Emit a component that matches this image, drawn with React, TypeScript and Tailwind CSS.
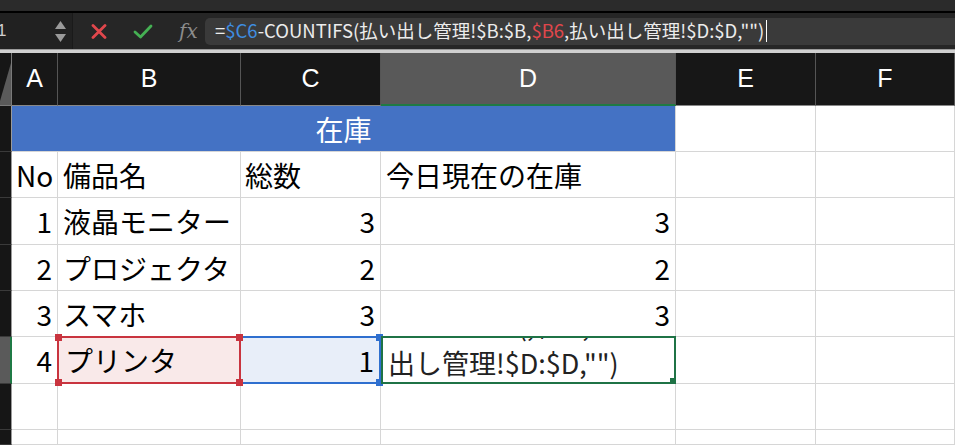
import type { ReactNode } from 'react'

const JP = "font-['Noto_Sans_CJK_JP','Noto_Sans',sans-serif]"

const COLS = ['A', 'B', 'C', 'D', 'E', 'F']

const ROWS: { no: number; name: string; total: number; stock: number }[] = [
  { no: 1, name: '液晶モニター', total: 3, stock: 3 },
  { no: 2, name: 'プロジェクタ', total: 2, stock: 2 },
  { no: 3, name: 'スマホ', total: 3, stock: 3 },
]

function Cell({ children, className = '' }: { children?: ReactNode; className?: string }) {
  return (
    <div className={`flex items-center overflow-hidden whitespace-nowrap border-b border-r border-[#d6d6d6] bg-white text-[28px] text-black ${className}`}>
      {children}
    </div>
  )
}

function RowHead({ active = false }: { active?: boolean }) {
  return (
    <div
      className={`border-b border-[#3a3a3a] ${
        active ? 'border-r-2 border-r-[#1f7a45] bg-[#5a5a5a]' : 'border-r border-r-[#9a9a9a] bg-[#161616]'
      }`}
    />
  )
}

function Handle({ className }: { className: string }) {
  return <span className={`absolute h-[7px] w-[7px] ${className}`} />
}

export default function App() {
  return (
    <div className={`flex h-[445px] w-[955px] flex-col overflow-hidden bg-[#1a1a1a] ${JP}`}>
      {/* window strip */}
      <div className="h-[13px] border-b-2 border-black bg-[#2b2b2b]" />

      {/* formula bar */}
      <div className="flex h-[36px] items-center bg-[#262626]">
        <div className="flex h-full w-[72px] items-center justify-between overflow-hidden bg-[#212121] pr-[6px]">
          <span className="-ml-[3px] font-['Liberation_Sans',sans-serif] text-[17px] text-[#cfcfcf]">1</span>
          <div className="flex flex-col gap-[5px]">
            <svg width="11" height="8" viewBox="0 0 11 8"><path d="M5.5 0L11 8H0z" fill="#9a9a9a" /></svg>
            <svg width="11" height="8" viewBox="0 0 11 8"><path d="M0 0H11L5.5 8z" fill="#9a9a9a" /></svg>
          </div>
        </div>
        <div className="h-full w-px bg-[#1a1a1a]" />
        <div className="ml-[18px] flex w-[114px] items-center gap-[26px]">
          <svg width="16" height="15" viewBox="0 0 16 15">
            <path d="M2 1.5L14 13.5M14 1.5L2 13.5" stroke="#e0474c" strokeWidth="2.8" strokeLinecap="round" />
          </svg>
          <svg width="20" height="15" viewBox="0 0 20 15">
            <path d="M2 8L7.5 13L18 2" stroke="#45b053" strokeWidth="2.8" fill="none" strokeLinecap="round" strokeLinejoin="round" />
          </svg>
          <span className="font-['DejaVu_Serif','Liberation_Serif',serif] text-[20px] italic text-[#8c8c8c]">fx</span>
        </div>
        <div className="flex h-[27px] flex-1 items-center rounded-l-[5px] bg-[#3a3a3a] pl-[10px] text-[18.5px] text-[#ececec]">
          <span>=</span>
          <span className="text-[#3f8de0]">$C6</span>
          <span>-COUNTIFS(払い出し管理!$B:$B,</span>
          <span className="text-[#e0474c]">$B6</span>
          <span>,払い出し管理!$D:$D,"")</span>
          <span className="ml-[2px] h-[22px] w-px bg-white" />
        </div>
      </div>

      <div className="h-[4px] border-t border-[#9a9a9a] bg-[#d0d0d0]" />

      {/* sheet */}
      <div className="grid flex-1 grid-cols-[12px_46px_183px_140px_295px_140px_1fr] grid-rows-[53px_46px_46px_47px_46px_46px_47px_46px_1fr]">
        {/* column headers */}
        <div className="flex items-end border-b border-r border-[#7a7a7a] bg-[#161616]">
          <svg width="11" height="48" viewBox="0 0 11 48"><path d="M0 48V44L11 6V48z" fill="#5a5a5a" /></svg>
        </div>
        {COLS.map((c) => (
          <div
            key={c}
            className={`flex items-center justify-center border-r border-[#555] font-['Liberation_Sans',sans-serif] text-[25px] text-white ${
              c === 'D' ? 'border-b-2 border-b-[#1f7a45] bg-[#595959]' : 'border-b border-b-[#888] bg-[#171717]'
            }`}
          >
            {c}
          </div>
        ))}

        {/* row 1 */}
        <RowHead />
        <div className="col-span-4 flex items-center justify-center border-b border-r border-[#d6d6d6] bg-[#4472c4] text-[28px] text-white">
          在庫
        </div>
        <Cell />
        <Cell />

        {/* row 2 */}
        <RowHead />
        <Cell className="pl-[4px]">No</Cell>
        <Cell className="pl-[5px]">備品名</Cell>
        <Cell className="pl-[4px]">総数</Cell>
        <Cell className="pl-[5px]">今日現在の在庫</Cell>
        <Cell />
        <Cell />

        {ROWS.map((r) => (
          <div key={r.no} className="contents">
            <RowHead />
            <Cell className="justify-end pr-[5px]">{r.no}</Cell>
            <Cell className="pl-[5px]">{r.name}</Cell>
            <Cell className="justify-end pr-[5px]">{r.total}</Cell>
            <Cell className="justify-end pr-[5px]">{r.stock}</Cell>
            <Cell />
            <Cell />
          </div>
        ))}

        {/* row 6: editing */}
        <RowHead active />
        <Cell className="justify-end pr-[5px]">4</Cell>
        <div className="relative z-10 -mt-px -ml-px flex items-center border-2 border-[#c9343f] bg-[#f9e9e9] pl-[6px] text-[28px] text-black">
          プリンタ
          <Handle className="-left-[4px] -top-[4px] bg-[#c9343f]" />
          <Handle className="-right-[4px] -top-[4px] bg-[#c9343f]" />
          <Handle className="-left-[4px] -bottom-[4px] bg-[#c9343f]" />
          <Handle className="-right-[4px] -bottom-[4px] bg-[#c9343f]" />
        </div>
        <div className="relative -mt-px flex items-center justify-end border-2 border-l-0 border-[#2f6fcf] bg-[#e8eef9] pr-[5px] text-[28px] text-black">
          1
          <Handle className="-right-[4px] -top-[4px] bg-[#2f6fcf]" />
          <Handle className="-right-[4px] -bottom-[4px] bg-[#2f6fcf]" />
        </div>
        <div className="relative -mt-px flex flex-col justify-end overflow-hidden border-2 border-[#1f7346] bg-white pl-[5px] text-[27px] leading-[38px] text-[#222]">
          <div className="whitespace-nowrap">COUNTIFS(,$B6,払い</div>
          <div className="whitespace-nowrap">出し管理!$D:$D,"")</div>
          <Handle className="-right-[3px] -bottom-[3px] bg-[#1f7346]" />
        </div>
        <Cell />
        <Cell />

        {/* empty rows */}
        {[7, 8].map((n) => (
          <div key={n} className="contents">
            <RowHead />
            <Cell />
            <Cell />
            <Cell />
            <Cell />
            <Cell />
            <Cell />
          </div>
        ))}
      </div>
    </div>
  )
}
